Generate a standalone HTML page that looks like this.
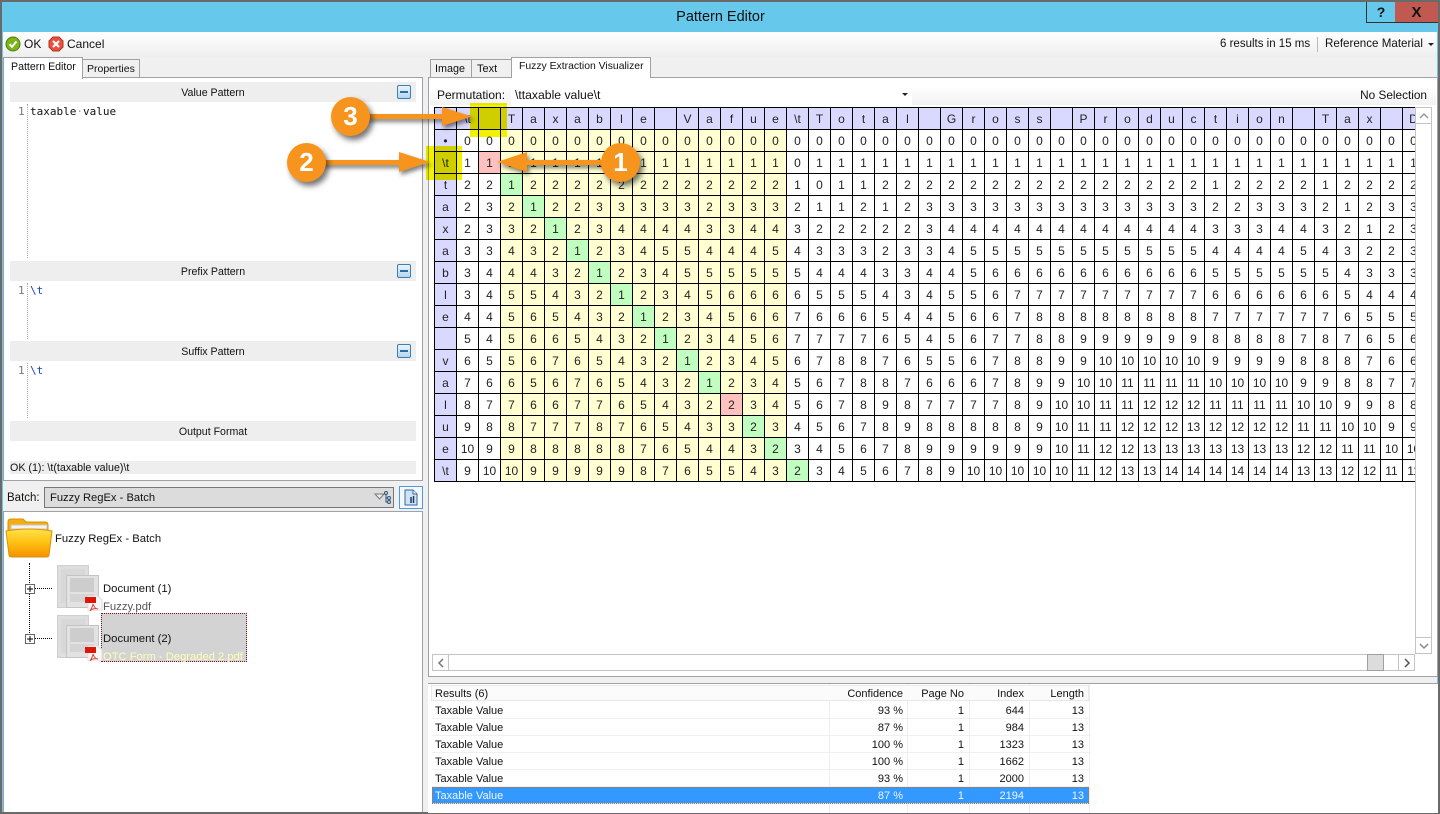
<!DOCTYPE html>
<html><head><meta charset="utf-8"><title>Pattern Editor</title>
<style>
html,body{margin:0;padding:0;width:1440px;height:814px;overflow:hidden;background:#f0f0f0}
body{position:relative;font:12px/16px "Liberation Sans",sans-serif;color:#111}
.a{position:absolute;box-sizing:border-box}
.t{position:absolute;white-space:nowrap;line-height:16px}
.bar{position:absolute;left:10px;width:406px;background:#eee;text-align:center;line-height:22px;height:20px;font-size:10.6px}
.min{position:absolute;left:397px;width:14px;height:14px;border:1px solid #3c7fb1;background:linear-gradient(#eaf4fb,#b5d6ee);box-sizing:border-box;border-radius:2px}
.min:after{content:"";position:absolute;left:2px;right:2px;top:5px;height:2px;background:#2a6ea8}
.ln{position:absolute;left:18px;color:#777;font:11px/14px "DejaVu Sans Mono",monospace}
.code{position:absolute;left:30px;font:11px/14px "DejaVu Sans Mono",monospace;white-space:pre}
.gut{position:absolute;left:27px;width:0;border-left:1px dotted #aaa}
#g{position:absolute;left:434px;top:107px;width:981px;height:376px;overflow:hidden}
#g table{border-collapse:separate;border-spacing:0;table-layout:fixed;width:990px;border-left:1px solid #000;border-top:1px solid #000}
#g th,#g td{box-sizing:border-box;width:22px;height:22px;padding:0;border-right:1px solid #000;border-bottom:1px solid #000;text-align:center;font:12px/18px "Liberation Sans",sans-serif;color:#222;overflow:hidden}
#g th{background:#d9d9ff;font-weight:normal}
#g col.y{background:#ffffd2}
#g td.g{background:#c0ffc0}
#g td.r{background:#ffc0c0}
.hl{position:absolute;background:#f2f200;mix-blend-mode:multiply}
.res{position:absolute;left:428px;top:683px;width:1010px;height:129px;background:#fff;border-top:1px solid #a0a0a0;overflow:hidden}
.v{position:absolute;width:1px;top:0;bottom:0;background:#eee}
.row{position:absolute;left:4px;width:657px;height:17px;line-height:19px;font-size:11px;border-bottom:1px solid #f0f0f0;box-sizing:border-box}
.row span{position:absolute;white-space:nowrap}
.c0{left:3px}.c1{right:186px}.c2{right:125px}.c3{right:65px}.c4{right:5px}
.sel{background:#3399ff;color:#eef6ff;outline:1px dotted #c8701c;outline-offset:-1px}
.circ{position:absolute;width:39px;height:39px;border-radius:50%;background:#f7941e;color:#fff;font:bold 26px/39px "Liberation Sans",sans-serif;text-align:center;box-shadow:3px 4px 6px rgba(0,0,0,.55)}
</style></head><body>

<!-- window frame -->
<div class="a" style="left:0;top:0;width:1440px;height:2px;background:#6a6a6a"></div>
<div class="a" style="left:0;top:0;width:2px;height:814px;background:#6a6a6a"></div>
<div class="a" style="left:1438px;top:0;width:2px;height:814px;background:#6a6a6a"></div>
<div class="a" style="left:0;top:812px;width:1440px;height:2px;background:#6a6a6a"></div>
<div class="a" style="left:2px;top:2px;width:1436px;height:30px;background:#66c8ea"></div>
<div class="a" style="left:2px;top:32px;width:1px;height:780px;background:#66c8ea"></div>
<div class="a" style="left:1437px;top:32px;width:1px;height:780px;background:#66c8ea"></div>
<div class="t" style="left:0;width:1441px;top:9px;text-align:center;font-size:14.5px;color:#111">Pattern Editor</div>
<div class="a" style="left:1366px;top:2px;width:29px;height:21px;background:#66c8ea;border-left:1px solid #333;border-bottom:1px solid #333;text-align:center;font:bold 14px/21px 'Liberation Sans',sans-serif;color:#111">?</div>
<div class="a" style="left:1395px;top:2px;width:43px;height:21px;background:#c05a50;border-bottom:1px solid #333;text-align:center;font:bold 15px/22px 'Liberation Sans',sans-serif;color:#111">X</div>

<!-- toolbar -->
<div class="a" style="left:3px;top:32px;width:1434px;height:25px;background:linear-gradient(#fff,#eee)"></div>
<svg class="a" style="left:5px;top:36px" width="16" height="16" viewBox="0 0 16 16"><circle cx="8" cy="8" r="7" fill="#7cb518" stroke="#4d7a10"/><path d="M4.5 8.2 7 10.8 11.5 5.5" fill="none" stroke="#fff" stroke-width="2"/></svg>
<div class="t" style="left:24px;top:36px">OK</div>
<svg class="a" style="left:48px;top:36px" width="16" height="16" viewBox="0 0 16 16"><path d="M5 1h6l4 4v6l-4 4H5l-4-4V5z" fill="#e8513f" stroke="#b5301f"/><path d="M5 5l6 6M11 5l-6 6" stroke="#fff" stroke-width="2"/></svg>
<div class="t" style="left:67px;top:36px">Cancel</div>
<div class="t" style="left:1220px;top:36px;font-size:11.5px">6 results in 15 ms</div>
<div class="a" style="left:1317px;top:37px;width:1px;height:15px;background:#bbb"></div>
<div class="t" style="left:1325px;top:36px;font-size:11.6px">Reference Material</div>
<div class="a" style="left:1428px;top:43px;border:3px solid transparent;border-top:3px solid #222"></div>

<!-- left panel -->
<div class="a" style="left:3px;top:77px;width:420px;height:404px;background:#fff;border:1px solid #a0a0a8"></div>
<div class="a" style="left:82px;top:59px;width:58px;height:19px;background:#f0f0f0;border:1px solid #a0a0a8"></div>
<div class="t" style="left:87px;top:61px;font-size:10.5px">Properties</div>
<div class="a" style="left:3px;top:57px;width:80px;height:22px;background:#fff;border:1px solid #a0a0a8;border-bottom:none"></div>
<div class="t" style="left:11px;top:59px;font-size:10.6px">Pattern Editor</div>

<div class="bar" style="top:82px">Value Pattern</div><div class="min" style="top:85px"></div>
<div class="ln" style="top:105px">1</div><div class="gut" style="top:104px;height:154px"></div>
<div class="code" style="top:105px">taxable<span style="color:#9ab">·</span>value</div>

<div class="bar" style="top:261px">Prefix Pattern</div><div class="min" style="top:264px"></div>
<div class="ln" style="top:284px">1</div><div class="gut" style="top:283px;height:56px"></div>
<div class="code" style="top:284px;color:#1a3fc0">\t</div>

<div class="bar" style="top:341px">Suffix Pattern</div><div class="min" style="top:344px"></div>
<div class="ln" style="top:364px">1</div><div class="gut" style="top:363px;height:55px"></div>
<div class="code" style="top:364px;color:#1a3fc0">\t</div>

<div class="bar" style="top:421px">Output Format</div>
<div class="a" style="left:10px;top:461px;width:406px;height:13px;background:#eee"></div>
<div class="t" style="left:10px;top:460px;font-size:10.7px">OK (1): \t(taxable value)\t</div>

<!-- batch row -->
<div class="t" style="left:7px;top:490px;font-size:11.5px">Batch:</div>
<div class="a" style="left:44px;top:487px;width:350px;height:21px;background:#dcdcdc;border:1px solid #777"></div>
<div class="t" style="left:50px;top:490px;font-size:11.2px">Fuzzy RegEx - Batch</div>
<svg class="a" style="left:374px;top:491px" width="18" height="14" viewBox="0 0 18 14"><path d="M1 3h9L5.500 8z" fill="#eee" stroke="#777"/><circle cx="12" cy="2" r="1.500" fill="#cde" stroke="#357"/><circle cx="15" cy="7" r="1.500" fill="#cde" stroke="#357"/><circle cx="15" cy="11" r="1.500" fill="#cde" stroke="#357"/><path d="M12 4v7h2M12 7h2" fill="none" stroke="#357"/></svg>
<div class="a" style="left:399px;top:486px;width:24px;height:23px;background:#f4f8fc;border:1px solid #4a9be0"></div>
<svg class="a" style="left:403px;top:489px" width="16" height="17" viewBox="0 0 16 17"><path d="M2 1h8l4 4v11H2z" fill="#cfe3f5" stroke="#356a9a"/><path d="M10 1v4h4" fill="#fff" stroke="#356a9a"/><path d="M8 8v6M10.500 7v7" stroke="#1c3f66" stroke-width="1.500"/></svg>

<!-- tree -->
<div class="a" style="left:3px;top:511px;width:420px;height:301px;background:#fff;border:1px solid #a0a0a8;border-bottom:none"></div>
<svg class="a" style="left:5px;top:517px" width="48" height="42" viewBox="0 0 48 42"><defs><linearGradient id="fo" x1="0" y1="0" x2="0" y2="1"><stop offset="0" stop-color="#ffe24a"/><stop offset=".5" stop-color="#ffbf10"/><stop offset="1" stop-color="#f59000"/></linearGradient></defs><path d="M3 5q0-3 3-3h12l3 3h19q3 0 3 3v10H3z" fill="#f5ad12" stroke="#d89000"/><rect x="6" y="8" width="36" height="4" fill="#f4f4f4" stroke="#c8c8c8"/><path d="M1 14q11-2 23-2t23 2l-3 24q0 2-3 2H7q-3 0-3-2z" fill="url(#fo)" stroke="#e09000"/></svg>
<div class="t" style="left:55px;top:531px;font-size:11.3px">Fuzzy RegEx - Batch</div>

<div class="a" style="left:29px;top:563px;height:78px;border-left:1px dotted #000"></div>
<div class="a" style="left:35px;top:588px;width:17px;border-top:1px dotted #000"></div>
<div class="a" style="left:35px;top:638px;width:17px;border-top:1px dotted #000"></div>
<svg class="a" style="left:25px;top:584px" width="10" height="10" viewBox="0 0 10 10"><rect x=".5" y=".5" width="9" height="9" fill="#fff" stroke="#666"/><path d="M2 5h6M5 2v6" stroke="#000"/></svg>
<svg class="a" style="left:25px;top:634px" width="10" height="10" viewBox="0 0 10 10"><rect x=".5" y=".5" width="9" height="9" fill="#fff" stroke="#666"/><path d="M2 5h6M5 2v6" stroke="#000"/></svg>

<div class="a" style="left:101px;top:613px;width:146px;height:49px;background:#d3d3d3;border:1px dotted #8a1020"></div>

<svg width="0" height="0" style="position:absolute"><defs><symbol id="dc" viewBox="0 0 46 46"><rect x=".5" y=".5" width="31" height="42" fill="#dedede" stroke="#cfcfcf"/><rect x="4" y="4" width="24" height="34" fill="#d8d8d8"/><rect x="9.500" y="10.500" width="32" height="32" fill="#e2e2e2" stroke="#c4c4c4"/><rect x="13" y="13" width="24" height="14" fill="#cdcdcd"/><rect x="13" y="29" width="24" height="8" fill="#d4d4d4"/><path d="M31 31h10l4 4v11H31z" fill="#f7f7f7" stroke="#ddd"/><rect x="28" y="32" width="11" height="6" fill="#e01505"/><path d="M36 39c1 3 3 5 5 5-3-1-7 0-8 2 1-2 3-5 3-7z" fill="none" stroke="#e04030"/></symbol></defs></svg>
<svg class="a" style="left:57px;top:565px" width="46" height="46"><use href="#dc"/></svg>
<svg class="a" style="left:57px;top:615px" width="46" height="46"><use href="#dc"/></svg>
<div class="t" style="left:103px;top:581px;font-size:11.3px">Document (1)</div>
<div class="t" style="left:103px;top:599px;font-size:11.3px;color:#555">Fuzzy.pdf</div>
<div class="t" style="left:103px;top:631px;font-size:11.3px">Document (2)</div>
<div class="t" style="left:103px;top:649px;font-size:11.2px;color:#fdfdb8">OTC Form - Degraded 2.pdf</div>

<!-- right panel -->
<div class="a" style="left:428px;top:77px;width:1010px;height:600px;background:#fff;border:1px solid #a0a0a8"></div>
<div class="a" style="left:430px;top:59px;width:42px;height:19px;background:#f0f0f0;border:1px solid #a0a0a8"></div>
<div class="a" style="left:471px;top:59px;width:41px;height:19px;background:#f0f0f0;border:1px solid #a0a0a8"></div>
<div class="t" style="left:435px;top:61px;font-size:10.8px">Image</div>
<div class="t" style="left:477px;top:61px;font-size:11px">Text</div>
<div class="a" style="left:511px;top:57px;width:140px;height:22px;background:#fff;border:1px solid #a0a0a8;border-bottom:none"></div>
<div class="t" style="left:519px;top:59px;font-size:10.4px">Fuzzy Extraction Visualizer</div>

<div class="a" style="left:430px;top:78px;width:1006px;height:27px;background:linear-gradient(#fff 30%,#f2f2f2)"></div>
<div class="a" style="left:511px;top:84px;width:401px;height:21px;background:#fff"></div>
<div class="t" style="left:437px;top:87px;font-size:12px">Permutation:</div>
<div class="t" style="left:515px;top:87px;font-size:12.2px">\ttaxable value\t</div>
<div class="a" style="left:902px;top:93px;border:3px solid transparent;border-top:3px solid #222"></div>
<div class="t" style="right:13px;top:87px;font-size:11.8px">No Selection</div>

<div id="g"><table>
<colgroup><col><col><col><col class="y"><col class="y"><col class="y"><col class="y"><col class="y"><col class="y"><col class="y"><col class="y"><col class="y"><col class="y"><col class="y"><col class="y"><col class="y"></colgroup>
<tr><th><th>\t<th><th>T<th>a<th>x<th>a<th>b<th>l<th>e<th><th>V<th>a<th>f<th>u<th>e<th>\t<th>T<th>o<th>t<th>a<th>l<th><th>G<th>r<th>o<th>s<th>s<th><th>P<th>r<th>o<th>d<th>u<th>c<th>t<th>i<th>o<th>n<th><th>T<th>a<th>x<th><th>D
<tr><th>•<td>0<td>0<td>0<td>0<td>0<td>0<td>0<td>0<td>0<td>0<td>0<td>0<td>0<td>0<td>0<td>0<td>0<td>0<td>0<td>0<td>0<td>0<td>0<td>0<td>0<td>0<td>0<td>0<td>0<td>0<td>0<td>0<td>0<td>0<td>0<td>0<td>0<td>0<td>0<td>0<td>0<td>0<td>0<td>0
<tr><th>\t<td>1<td class="r">1<td>1<td>1<td>1<td>1<td>1<td>1<td>1<td>1<td>1<td>1<td>1<td>1<td>1<td>0<td>1<td>1<td>1<td>1<td>1<td>1<td>1<td>1<td>1<td>1<td>1<td>1<td>1<td>1<td>1<td>1<td>1<td>1<td>1<td>1<td>1<td>1<td>1<td>1<td>1<td>1<td>1<td>1
<tr><th>t<td>2<td>2<td class="g">1<td>2<td>2<td>2<td>2<td>2<td>2<td>2<td>2<td>2<td>2<td>2<td>2<td>1<td>0<td>1<td>1<td>2<td>2<td>2<td>2<td>2<td>2<td>2<td>2<td>2<td>2<td>2<td>2<td>2<td>2<td>2<td>1<td>2<td>2<td>2<td>2<td>1<td>2<td>2<td>2<td>2
<tr><th>a<td>2<td>3<td>2<td class="g">1<td>2<td>2<td>3<td>3<td>3<td>3<td>3<td>2<td>3<td>3<td>3<td>2<td>1<td>1<td>2<td>1<td>2<td>3<td>3<td>3<td>3<td>3<td>3<td>3<td>3<td>3<td>3<td>3<td>3<td>3<td>2<td>2<td>3<td>3<td>3<td>2<td>1<td>2<td>3<td>3
<tr><th>x<td>2<td>3<td>3<td>2<td class="g">1<td>2<td>3<td>4<td>4<td>4<td>4<td>3<td>3<td>4<td>4<td>3<td>2<td>2<td>2<td>2<td>2<td>3<td>4<td>4<td>4<td>4<td>4<td>4<td>4<td>4<td>4<td>4<td>4<td>4<td>3<td>3<td>3<td>4<td>4<td>3<td>2<td>1<td>2<td>3
<tr><th>a<td>3<td>3<td>4<td>3<td>2<td class="g">1<td>2<td>3<td>4<td>5<td>5<td>4<td>4<td>4<td>5<td>4<td>3<td>3<td>3<td>2<td>3<td>3<td>4<td>5<td>5<td>5<td>5<td>5<td>5<td>5<td>5<td>5<td>5<td>5<td>4<td>4<td>4<td>4<td>5<td>4<td>3<td>2<td>2<td>3
<tr><th>b<td>3<td>4<td>4<td>4<td>3<td>2<td class="g">1<td>2<td>3<td>4<td>5<td>5<td>5<td>5<td>5<td>5<td>4<td>4<td>4<td>3<td>3<td>4<td>4<td>5<td>6<td>6<td>6<td>6<td>6<td>6<td>6<td>6<td>6<td>6<td>5<td>5<td>5<td>5<td>5<td>5<td>4<td>3<td>3<td>3
<tr><th>l<td>3<td>4<td>5<td>5<td>4<td>3<td>2<td class="g">1<td>2<td>3<td>4<td>5<td>6<td>6<td>6<td>6<td>5<td>5<td>5<td>4<td>3<td>4<td>5<td>5<td>6<td>7<td>7<td>7<td>7<td>7<td>7<td>7<td>7<td>7<td>6<td>6<td>6<td>6<td>6<td>6<td>5<td>4<td>4<td>4
<tr><th>e<td>4<td>4<td>5<td>6<td>5<td>4<td>3<td>2<td class="g">1<td>2<td>3<td>4<td>5<td>6<td>6<td>7<td>6<td>6<td>6<td>5<td>4<td>4<td>5<td>6<td>6<td>7<td>8<td>8<td>8<td>8<td>8<td>8<td>8<td>8<td>7<td>7<td>7<td>7<td>7<td>7<td>6<td>5<td>5<td>5
<tr><th><td>5<td>4<td>5<td>6<td>6<td>5<td>4<td>3<td>2<td class="g">1<td>2<td>3<td>4<td>5<td>6<td>7<td>7<td>7<td>7<td>6<td>5<td>4<td>5<td>6<td>7<td>7<td>8<td>8<td>9<td>9<td>9<td>9<td>9<td>9<td>8<td>8<td>8<td>8<td>7<td>8<td>7<td>6<td>5<td>6
<tr><th>v<td>6<td>5<td>5<td>6<td>7<td>6<td>5<td>4<td>3<td>2<td class="g">1<td>2<td>3<td>4<td>5<td>6<td>7<td>8<td>8<td>7<td>6<td>5<td>5<td>6<td>7<td>8<td>8<td>9<td>9<td>10<td>10<td>10<td>10<td>10<td>9<td>9<td>9<td>9<td>8<td>8<td>8<td>7<td>6<td>6
<tr><th>a<td>7<td>6<td>6<td>5<td>6<td>7<td>6<td>5<td>4<td>3<td>2<td class="g">1<td>2<td>3<td>4<td>5<td>6<td>7<td>8<td>8<td>7<td>6<td>6<td>6<td>7<td>8<td>9<td>9<td>10<td>10<td>11<td>11<td>11<td>11<td>10<td>10<td>10<td>10<td>9<td>9<td>8<td>8<td>7<td>7
<tr><th>l<td>8<td>7<td>7<td>6<td>6<td>7<td>7<td>6<td>5<td>4<td>3<td>2<td class="r">2<td>3<td>4<td>5<td>6<td>7<td>8<td>9<td>8<td>7<td>7<td>7<td>7<td>8<td>9<td>10<td>10<td>11<td>11<td>12<td>12<td>12<td>11<td>11<td>11<td>11<td>10<td>10<td>9<td>9<td>8<td>8
<tr><th>u<td>9<td>8<td>8<td>7<td>7<td>7<td>8<td>7<td>6<td>5<td>4<td>3<td>3<td class="g">2<td>3<td>4<td>5<td>6<td>7<td>8<td>9<td>8<td>8<td>8<td>8<td>8<td>9<td>10<td>11<td>11<td>12<td>12<td>12<td>13<td>12<td>12<td>12<td>12<td>11<td>11<td>10<td>10<td>9<td>9
<tr><th>e<td>10<td>9<td>9<td>8<td>8<td>8<td>8<td>8<td>7<td>6<td>5<td>4<td>4<td>3<td class="g">2<td>3<td>4<td>5<td>6<td>7<td>8<td>9<td>9<td>9<td>9<td>9<td>9<td>10<td>11<td>12<td>12<td>13<td>13<td>13<td>13<td>13<td>13<td>13<td>12<td>12<td>11<td>11<td>10<td>10
<tr><th>\t<td>9<td>10<td>10<td>9<td>9<td>9<td>9<td>9<td>8<td>7<td>6<td>5<td>5<td>4<td>3<td class="g">2<td>3<td>4<td>5<td>6<td>7<td>8<td>9<td>10<td>10<td>10<td>10<td>10<td>11<td>12<td>13<td>13<td>14<td>14<td>14<td>14<td>14<td>14<td>13<td>13<td>12<td>12<td>11<td>11
</table></div>

<!-- scrollbars -->
<div class="a" style="left:1415px;top:107px;width:17px;height:547px;background:#fff;border:1px solid #c4c4c4"></div>
<div class="a" style="left:1415px;top:107px;width:17px;height:17px;border:1px solid #c4c4c4"></div>
<div class="a" style="left:1415px;top:637px;width:17px;height:17px;border:1px solid #c4c4c4"></div>
<svg class="a" style="left:1418px;top:111px" width="12" height="10"><path d="M2 7l4-4 4 4" fill="none" stroke="#999" stroke-width="1.500"/></svg>
<svg class="a" style="left:1418px;top:641px" width="12" height="10"><path d="M2 3l4 4 4-4" fill="none" stroke="#888" stroke-width="1.500"/></svg>
<div class="a" style="left:432px;top:654px;width:983px;height:17px;background:#fff;border:1px solid #c4c4c4"></div>
<div class="a" style="left:432px;top:654px;width:17px;height:17px;border:1px solid #c4c4c4"></div>
<div class="a" style="left:1398px;top:654px;width:17px;height:17px;border:1px solid #c4c4c4"></div>
<div class="a" style="left:1367px;top:654px;width:17px;height:17px;background:#dcdcdc;border:1px solid #a0a0a0"></div>
<svg class="a" style="left:436px;top:657px" width="10" height="12"><path d="M7 2L3 6l4 4" fill="none" stroke="#777" stroke-width="1.500"/></svg>
<svg class="a" style="left:1402px;top:657px" width="10" height="12"><path d="M3 2l4 4-4 4" fill="none" stroke="#555" stroke-width="1.500"/></svg>

<!-- results -->
<div class="res">
<div class="v" style="left:401px"></div><div class="v" style="left:479px"></div><div class="v" style="left:541px"></div><div class="v" style="left:601px"></div><div class="v" style="left:661px"></div>
<div class="a" style="left:3px;top:1px;width:658px;height:16px;background:#fbfbfb;border:1px solid #e8e8e8"></div>
<div class="row" style="top:1px;height:17px;border:none"><span class="c0">Results (6)</span><span class="c1">Confidence</span><span class="c2">Page No</span><span class="c3">Index</span><span class="c4">Length</span></div>
<div class="row" style="top:18px"><span class="c0">Taxable Value</span><span class="c1">93 %</span><span class="c2">1</span><span class="c3">644</span><span class="c4">13</span></div>
<div class="row" style="top:35px"><span class="c0">Taxable Value</span><span class="c1">87 %</span><span class="c2">1</span><span class="c3">984</span><span class="c4">13</span></div>
<div class="row" style="top:52px"><span class="c0">Taxable Value</span><span class="c1">100 %</span><span class="c2">1</span><span class="c3">1323</span><span class="c4">13</span></div>
<div class="row" style="top:69px"><span class="c0">Taxable Value</span><span class="c1">100 %</span><span class="c2">1</span><span class="c3">1662</span><span class="c4">13</span></div>
<div class="row" style="top:86px"><span class="c0">Taxable Value</span><span class="c1">93 %</span><span class="c2">1</span><span class="c3">2000</span><span class="c4">13</span></div>
<div class="row sel" style="top:103px"><span class="c0">Taxable Value</span><span class="c1">87 %</span><span class="c2">1</span><span class="c3">2194</span><span class="c4">13</span></div>
</div>

<!-- annotations -->
<div class="hl" style="left:470px;top:103px;width:37px;height:34px"></div>
<div class="hl" style="left:426px;top:146px;width:36px;height:34px"></div>
<svg class="a" style="left:0;top:0;filter:drop-shadow(2px 3px 2px rgba(0,0,0,.5))" width="700" height="200">
<path d="M360 114H442V107L472 116.500 442 126V119H360z" fill="#f7941e"/>
<path d="M320 160H399V152L430 162 399 172V165H320z" fill="#f7941e"/>
<path d="M610 160H527V152L497 162 527 172V165H610z" fill="#f7941e"/>
</svg>
<div class="circ" style="left:331px;top:97px">3</div>
<div class="circ" style="left:287px;top:143px">2</div>
<div class="circ" style="left:601px;top:143px">1</div>

</body></html>
